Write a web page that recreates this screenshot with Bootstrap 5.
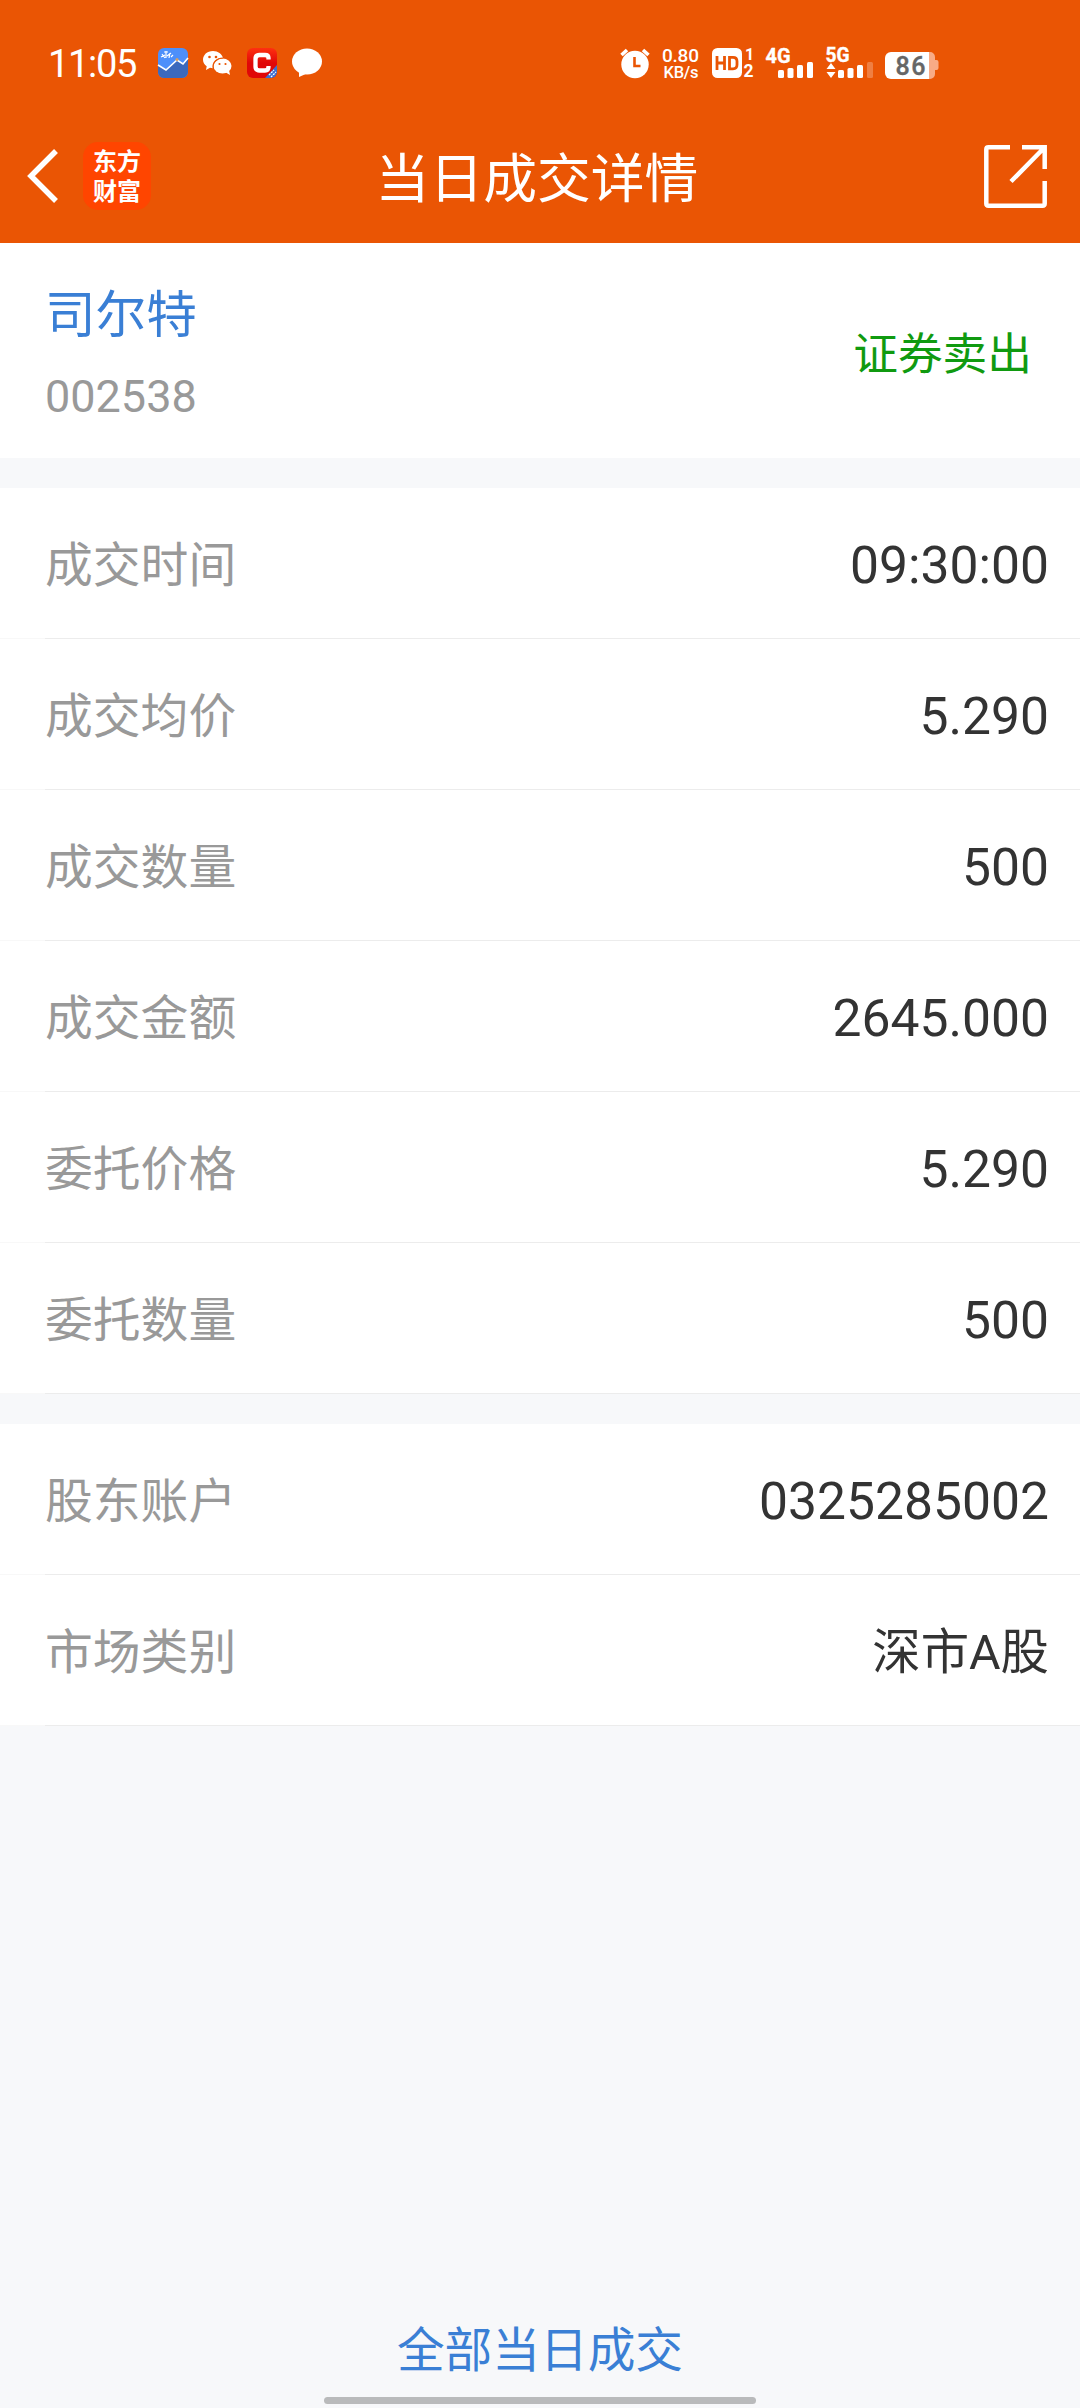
<!DOCTYPE html>
<html lang="zh-CN">
<head>
<meta charset="utf-8">
<meta name="viewport" content="width=device-width, initial-scale=1">
<title>当日成交详情</title>
<link href="https://cdn.jsdelivr.net/npm/bootstrap@5.3.0/dist/css/bootstrap.min.css" rel="stylesheet">
<style>
  body { background: #f7f8fa; font-family: Roboto, "Noto Sans CJK SC", sans-serif; color: #333; min-height: 2408px; }
  svg { display: block; flex: none; overflow: visible; }
  svg text { font-family: Roboto, "Noto Sans CJK SC", sans-serif; }
  .app-top { background: #ea5504; height: 243px; }
  .status-bar { height: 126px; padding: 0 141px 0 48px; }
  .clock { font-size: 38px; line-height: 1; width: 110px; letter-spacing: -1.3px; padding-top: 2px; }
  .notif { gap: 15px; }
  .signals { gap: 12.400px; }
  .title-bar { height: 100px; padding: 0 33px 0 27px; }
  .side { width: 200px; gap: 25px; }
  .page-title { font-size: 53.8px; line-height: 92px; padding-top: 8px; }
  .em-logo { width: 68px; height: 68px; border-radius: 15px; background: #ff4500; font: 700 24px/30px "Noto Sans CJK SC", sans-serif; padding-top: 3px; }
  .stock { height: 215px; padding: 8px 48px 0 45px; }
  .stock-name { font-size: 50.6px; line-height: 60px; color: #3a7fd5; }
  .stock-code { font-size: 45px; line-height: 54px; color: #999; }
  .side-tag { font-size: 44.7px; color: #109a10; line-height: 60px; }
  .detail-list { margin-top: 30px; --bs-list-group-border-radius: 0; }
  .detail-row { height: 151px; padding: 4px 30px 0 45px; border: 0; background: linear-gradient(to right, #f8f8f8 45px, #ececec 45px) bottom / 100% 1px no-repeat #fff; }
  .lbl { font-size: 47.8px; color: #999; line-height: 70px; }
  .val { font-size: 51.6px; color: #333; line-height: 70px; padding-right: 1px; }
  .val-cjk { font-size: 48.4px; }
  .all-link { font-size: 47.7px; line-height: 70px; color: #3a7fd5; }
  .home-pill { width: 432px; height: 7px; border-radius: 4px; background: #b9babb; margin: 11px 0 4px; }
</style>
</head>
<body class="d-flex flex-column">
<header class="app-top text-white">
  <div class="status-bar d-flex align-items-center justify-content-between">
    <div class="d-flex align-items-center">
      <div class="clock">11:05</div>
      <div class="notif d-flex align-items-center">
        <svg width="30" height="30" viewBox="0 0 30 30"><rect width="30" height="30" rx="6" fill="#4d8ffa"/><path d="M0 17L8 22 19 12 25 16 30 11V24a6 6 0 0 1-6 6H6a6 6 0 0 1-6-6Z" fill="#3c69bd"/><path d="M0 17L8 22 19 12 25 16 30 10" fill="none" stroke="#fff" stroke-width="1.6"/><path d="M3 9l4-2M4 6l3 4M8 3v7M6 4h4M9 8l4-3M12 5l-1 5M13 9l2-2" stroke="#fff" stroke-width="1.2"/><circle cx="19" cy="11.500" r="1.500" fill="#d9a060"/></svg>
        <svg width="29" height="24" viewBox="0 0 29 24"><path d="M10 0C4 0 0 4 0 8.800c0 2.700 1.500 5 3.700 6.500L3 19l4-2.200 3 .4C9 11 14 6.500 20 7 19 3 15 0 10 0Z" fill="#fff"/><ellipse cx="19.500" cy="15" rx="9" ry="7.500" fill="#fff"/><path d="M22 21l5 3-1-5Z" fill="#fff"/><path d="M10.200 17.500C9 11.500 14 7 20 7" fill="none" stroke="#ea5504" stroke-width="1.200"/><g fill="#ea5504"><circle cx="6.500" cy="6" r="1.300"/><circle cx="13" cy="6" r="1.300"/><circle cx="16.500" cy="13" r="1.100"/><circle cx="22.500" cy="13" r="1.100"/></g></svg>
        <svg width="30" height="30" viewBox="0 0 30 30"><defs><linearGradient id="redFade" x2="0" y2="1"><stop stop-color="#ff3010"/><stop offset=".5" stop-color="#e00808"/></linearGradient><clipPath id="appClip"><rect width="30" height="30" rx="6"/></clipPath></defs><g clip-path="url(#appClip)"><rect width="30" height="30" fill="url(#redFade)"/><path d="M30 17V30H18Z" fill="#3c6fd0"/><path d="M22 27l5-5M24 29l5-5" stroke="#fff" stroke-width="1.300" stroke-dasharray="2 1"/></g><path d="M21.500 11.500V10Q21.500 7 18 7H12.500Q8.500 7 8.500 11V18.500Q8.500 22.500 12.500 22.500H18Q21.500 22.500 21.500 19V18" fill="none" stroke="#fff" stroke-width="4.300"/></svg>
        <svg width="30" height="30" viewBox="0 0 30 30"><ellipse cx="15" cy="13.500" rx="15" ry="13" fill="#fff"/><path d="M7 22v7l9-4Z" fill="#fff"/></svg>
      </div>
    </div>
    <div class="signals d-flex align-items-center">
      <svg width="30" height="30" viewBox="0 0 30 30"><circle cx="15" cy="16.500" r="13.700" fill="#fff"/><path d="M1.500 7L7 2M28.500 7L23 2" stroke="#fff" stroke-width="3.600"/><path d="M14.500 9v9h6" fill="none" stroke="#ea5504" stroke-width="2.600"/></svg>
      <svg width="37" height="30" viewBox="0 0 37 30" fill="#fff" font-weight="500"><text x="0" y="14" font-size="19" textLength="37">0.80</text><text x="1.500" y="30" font-size="16.500" textLength="35">KB/s</text></svg>
      <svg width="42" height="30" viewBox="0 0 42 30"><rect width="30" height="30" rx="5.500" fill="#fff"/><path d="M5 8v14M12.500 8v14M5 15h7.500M17.500 9.300h3.500q4 0 4 4v3.500q0 4-4 4h-3.500z" fill="none" stroke="#ea5504" stroke-width="2.800"/><g fill="#fff" font-weight="700"><text x="33" y="11.500" font-size="16">1</text><text x="31.500" y="29" font-size="17.500">2</text></g></svg>
      <svg width="47" height="30" viewBox="0 0 47 30" fill="#fff"><text x="-.5" y="14.500" font-size="20.500" font-weight="700" stroke="#fff" stroke-width=".4" textLength="25" lengthAdjust="spacingAndGlyphs">4G</text><rect x="12" y="22" width="6" height="8" rx="1.500"/><rect x="21.500" y="20" width="6" height="10" rx="1.500"/><rect x="31" y="17" width="6" height="13" rx="1.500"/><rect x="41" y="14" width="6" height="16" rx="1.500"/></svg>
      <svg width="47" height="30" viewBox="0 0 47 30" fill="#fff"><text x="-.5" y="14" font-size="20" font-weight="700" stroke="#fff" stroke-width=".4" textLength="24" lengthAdjust="spacingAndGlyphs">5G</text><path d="M5 15l4.500 6H.5ZM5 30l4.500-6H.5Z"/><rect x="12" y="22" width="6" height="8" rx="1.500"/><rect x="21.500" y="20" width="6" height="10" rx="1.500"/><rect x="31" y="17" width="6" height="13" rx="1.500"/><rect x="41" y="14" width="6" height="16" rx="1.500" opacity=".25"/></svg>
      <svg class="mt-1" width="54" height="27" viewBox="0 0 54 27"><path d="M40 0h5a5 5 0 0 1 5 5v3h1.500a2 2 0 0 1 2 2v6a2 2 0 0 1-2 2H50v4a5 5 0 0 1-5 5h-5Z" fill="#f8ab86"/><path d="M6 0H44V27H6a6 6 0 0 1-6-6V6a6 6 0 0 1 6-6Z" fill="#fff"/><text x="10.500" y="22.500" font-size="25" font-weight="500" fill="#666" stroke="#666" stroke-width=".4" textLength="30">86</text></svg>
    </div>
  </div>
  <nav class="title-bar d-flex align-items-center justify-content-between">
    <div class="side d-flex align-items-center">
      <svg width="31" height="54" viewBox="0 0 31 54"><path d="M29 2L4 27 29 52" fill="none" stroke="#fff" stroke-width="5.500"/></svg>
      <div class="em-logo text-center">东方<br>财富</div>
    </div>
    <div class="page-title">当日成交详情</div>
    <div class="side d-flex justify-content-end">
      <svg width="63" height="63" viewBox="0 0 63 63" fill="none" stroke="#fff" stroke-width="4.500"><path d="M26 2.300H4.500Q2.300 2.300 2.300 4.500V58.500Q2.300 60.700 4.500 60.700H58.500Q60.700 60.700 60.700 58.500V36M38 2.300H60.700V24M60 3L27 36.500"/></svg>
    </div>
  </nav>
</header>
<main>
  <section class="stock bg-white d-flex align-items-center justify-content-between">
    <div class="stock-id"><div class="stock-name">司尔特</div><div class="stock-code mt-4">002538</div></div>
    <div class="side-tag">证券卖出</div>
  </section>
  <ul class="detail-list list-group list-group-flush">
    <li class="detail-row list-group-item d-flex align-items-center justify-content-between"><span class="lbl">成交时间</span><span class="val">09:30:00</span></li>
    <li class="detail-row list-group-item d-flex align-items-center justify-content-between"><span class="lbl">成交均价</span><span class="val">5.290</span></li>
    <li class="detail-row list-group-item d-flex align-items-center justify-content-between"><span class="lbl">成交数量</span><span class="val">500</span></li>
    <li class="detail-row list-group-item d-flex align-items-center justify-content-between"><span class="lbl">成交金额</span><span class="val">2645.000</span></li>
    <li class="detail-row list-group-item d-flex align-items-center justify-content-between"><span class="lbl">委托价格</span><span class="val">5.290</span></li>
    <li class="detail-row list-group-item d-flex align-items-center justify-content-between"><span class="lbl">委托数量</span><span class="val">500</span></li>
  </ul>
  <ul class="detail-list list-group list-group-flush">
    <li class="detail-row list-group-item d-flex align-items-center justify-content-between"><span class="lbl">股东账户</span><span class="val">0325285002</span></li>
    <li class="detail-row list-group-item d-flex align-items-center justify-content-between"><span class="lbl">市场类别</span><span class="val val-cjk">深市A股</span></li>
  </ul>
</main>
<footer class="mt-auto d-flex flex-column align-items-center">
  <a href="#" class="all-link text-decoration-none">全部当日成交</a>
  <div class="home-pill"></div>
</footer>
<script src="https://cdn.jsdelivr.net/npm/bootstrap@5.3.0/dist/js/bootstrap.bundle.min.js"></script>
</body>
</html>
